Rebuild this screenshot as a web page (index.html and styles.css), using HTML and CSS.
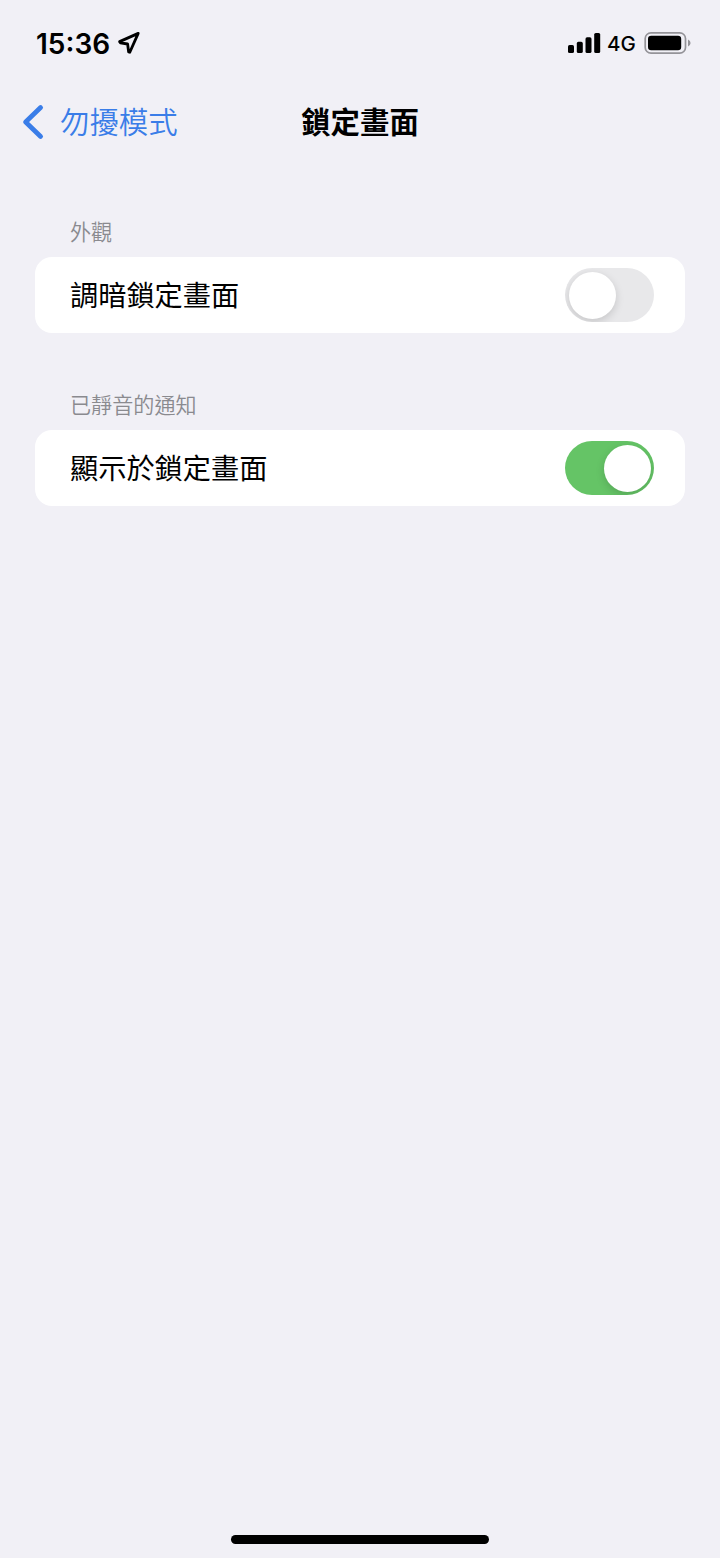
FILE: index.html
```html
<!DOCTYPE html>
<html lang="zh-Hant">
<head>
    <meta charset="UTF-8">
    <meta name="viewport" content="width=device-width, initial-scale=1.0">
    <title>鎖定畫面</title>
    <link rel="stylesheet" href="styles.css">
</head>
<body>

<div class="screen">
    <header class="status-bar">
        <div class="status-left">
            <span class="time">15:36</span>
            <svg class="location" width="24" height="24" viewBox="0 0 24 24">
                <path d="M21.2 2.4 L2.6 10.6 L3.4 11.8 L10.6 13 L11.6 20.8 L12.8 21.2 Z" />
            </svg>
        </div>
        <div class="status-right">
            <svg class="signal" width="33" height="22" viewBox="0 0 33 22">
                <rect x="0" y="13" width="6" height="8" rx="1.6" />
                <rect x="8.8" y="9.8" width="6" height="11.2" rx="1.6" />
                <rect x="17.5" y="5.3" width="6" height="15.7" rx="1.6" />
                <rect x="26.2" y="1" width="6" height="20" rx="1.6" />
            </svg>
            <span class="network">4G</span>
            <svg class="battery" width="47" height="24" viewBox="0 0 47 24">
                <rect class="battery-case" x="1.2" y="1.8" width="40.3" height="20.4" rx="5.8" />
                <rect x="4" y="4.7" width="33.2" height="14.6" rx="3.2" />
                <path class="battery-tip" d="M44 8.5 Q46.6 9.7 46.6 12 Q46.6 14.3 44 15.5 Z" />
            </svg>
        </div>
    </header>

    <nav class="nav-bar">
        <a class="back" href="#">
            <svg class="chevron" width="22" height="36" viewBox="0 0 22 36">
                <path d="M18.6 3.6 L3.6 18 L18.6 32.4" />
            </svg>
            <span class="label">勿擾模式</span>
        </a>
        <h1 class="label">鎖定畫面</h1>
    </nav>

    <main>
        <section class="group">
            <h2>外觀</h2>
            <div class="card">
                <span class="row-text">調暗鎖定畫面</span>
                <button class="switch" type="button" role="switch" aria-checked="false"><span class="knob"></span></button>
            </div>
        </section>
        <section class="group">
            <h2>已靜音的通知</h2>
            <div class="card">
                <span class="row-text">顯示於鎖定畫面</span>
                <button class="switch on" type="button" role="switch" aria-checked="true"><span class="knob"></span></button>
            </div>
        </section>
    </main>

    <div class="home-indicator"></div>
</div>

</body>
</html>
```

FILE: styles.css
```css
:root {
    --background: #f1f0f6;
    --blue: #3a7de8;
    --green: #65c466;
    --grey: #8a8a8f;
}
* {
    box-sizing: border-box;
}
body {
    margin: 0;
    background-color: var(--background);
    color: #000;
    font-family: "Noto Sans CJK TC", sans-serif;
}
.screen {
    display: flex;
    flex-direction: column;
    height: 1558px;
    padding-bottom: 14px;
}
.status-bar {
    display: flex;
    justify-content: space-between;
    align-items: center;
    height: 87px;
    padding: 0 29px 1px 36px;
    font-family: Inter, "Liberation Sans", sans-serif;
}
.status-left,
.status-right {
    display: flex;
    align-items: center;
}
.time {
    width: 81px;
    padding-top: 1px;
    font-size: 28px;
    font-weight: 600;
    line-height: 34px;
}
.location {
    fill: none;
    stroke: #000;
    stroke-width: 2.8;
    stroke-linejoin: round;
}
.network {
    width: 43px;
    padding: 2px 0 0 6px;
    font-size: 20.5px;
    font-weight: 450;
    line-height: 26px;
}
.battery-case {
    fill: none;
    stroke: #949398;
    stroke-width: 1.7;
}
.battery-tip {
    fill: #949398;
}
.nav-bar {
    display: grid;
    grid-template-columns: 1fr auto 1fr;
    align-items: center;
    height: 70px;
    padding: 0 22px;
}
.back {
    display: flex;
    align-items: center;
    gap: 16px;
    color: var(--blue);
    font-size: 29.4px;
    font-weight: 350;
    line-height: 44px;
    text-decoration: none;
}
.label {
    padding-bottom: 5px;
}
.chevron {
    fill: none;
    stroke: var(--blue);
    stroke-width: 4.8;
    stroke-linecap: round;
    stroke-linejoin: round;
}
h1 {
    margin: 0;
    font-size: 29.4px;
    font-weight: 700;
    line-height: 44px;
}
main {
    flex: 1;
    padding: 60px 35px 0;
}
.group {
    margin-bottom: 57px;
}
h2 {
    margin: 0;
    padding-left: 35px;
    color: var(--grey);
    font-size: 21.1px;
    font-weight: 350;
    line-height: 28px;
    height: 40px;
}
.card {
    display: flex;
    justify-content: space-between;
    align-items: center;
    height: 76px;
    padding: 0 31px 0 35px;
    border-radius: 17px;
    background-color: #fff;
    font-size: 28.2px;
    line-height: 42px;
}
.row-text {
    padding-bottom: 3px;
}
.switch {
    display: flex;
    align-items: center;
    width: 89px;
    height: 54px;
    padding: 0 3.5px;
    border: none;
    border-radius: 27px;
    overflow: hidden;
    background-color: #e8e8ea;
}
.switch.on {
    justify-content: flex-end;
    background-color: var(--green);
}
.knob {
    width: 47px;
    height: 47px;
    border-radius: 50%;
    background-color: #fff;
    box-shadow: 0 3px 9px rgba(0, 0, 0, 0.15);
}
.home-indicator {
    width: 258px;
    height: 9px;
    margin: 0 auto;
    border-radius: 5px;
    background-color: #000;
}
```
